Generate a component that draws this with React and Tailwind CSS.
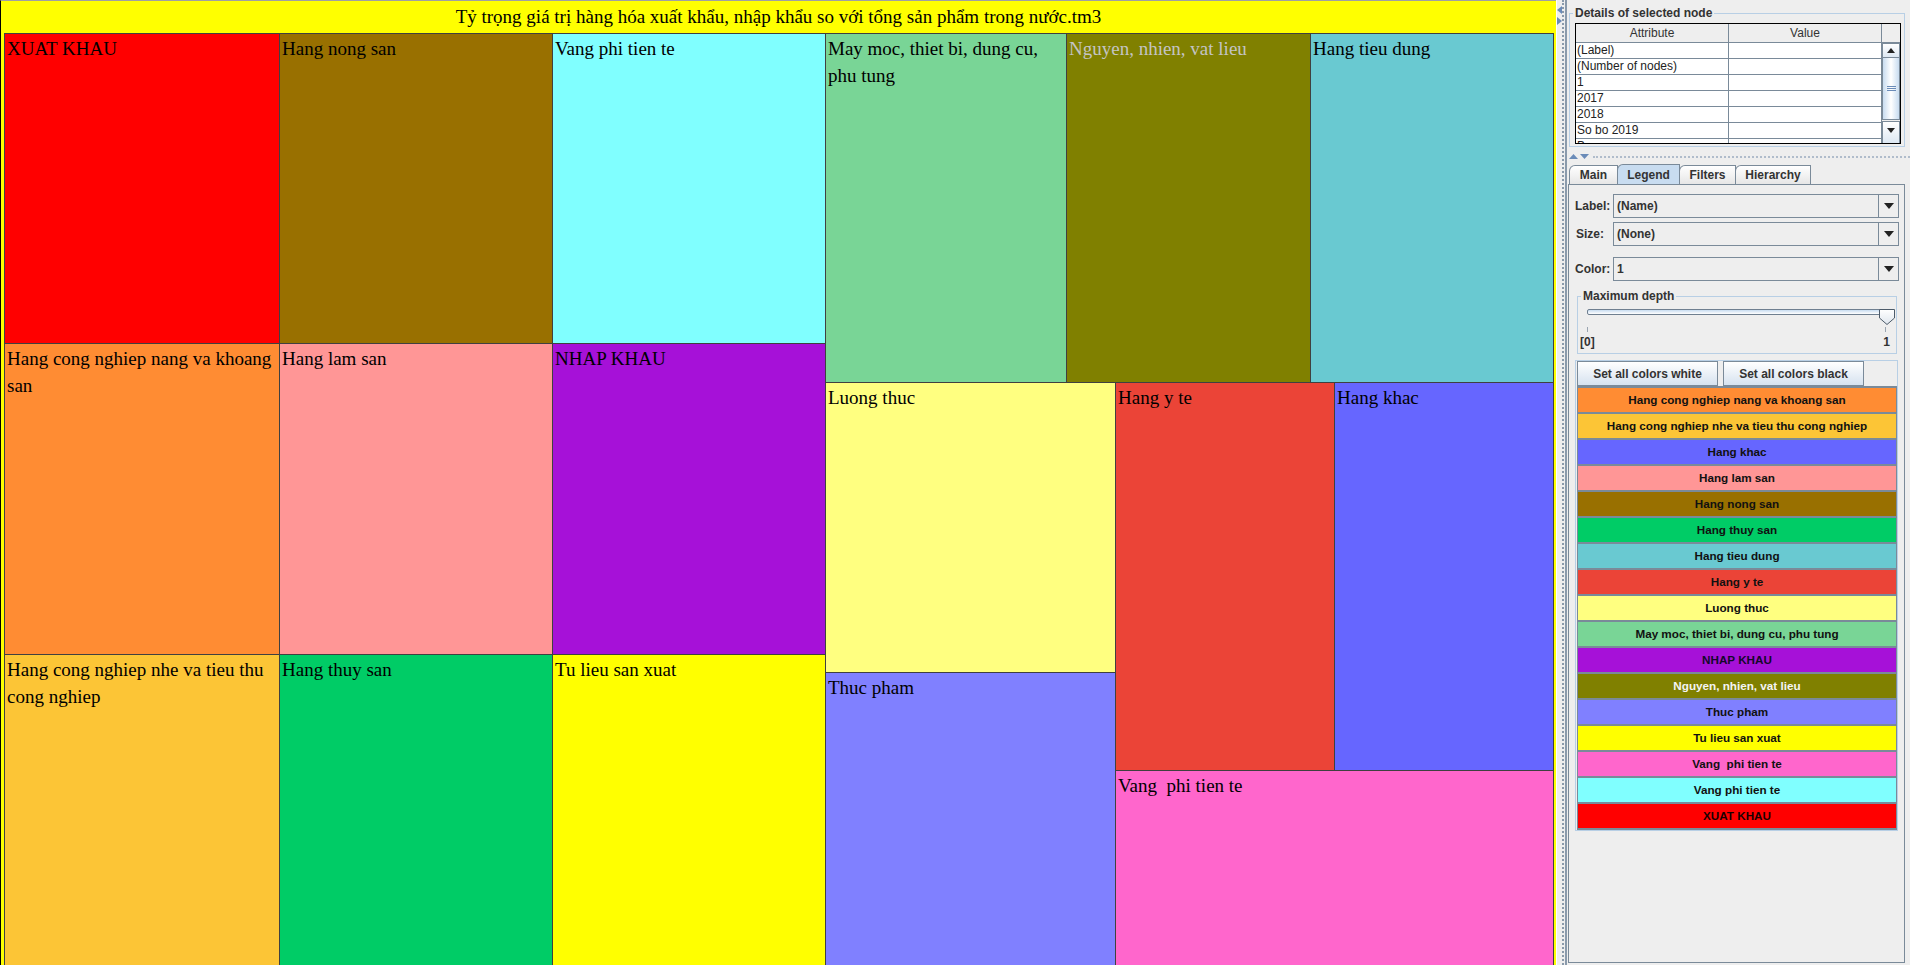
import React from 'react';

const Tile = ({ label, bg, text = 'text-black', className = '' }) => (
  <div className={`border-l border-t border-[#404040] pl-[2px] pt-[1px] overflow-hidden ${bg} ${text} ${className}`}>
    <div className="text-[19px] leading-[27px]">{label}</div>
  </div>
);

const legendItems = [
  { name: 'Hang cong nghiep nang va khoang san', bg: 'bg-[#ff8c33]' },
  { name: 'Hang cong nghiep nhe va tieu thu cong nghiep', bg: 'bg-[#fcc536]' },
  { name: 'Hang khac', bg: 'bg-[#6666ff]' },
  { name: 'Hang lam san', bg: 'bg-[#ff9696]' },
  { name: 'Hang nong san', bg: 'bg-[#997000]' },
  { name: 'Hang thuy san', bg: 'bg-[#00cc66]' },
  { name: 'Hang tieu dung', bg: 'bg-[#69c9d1]' },
  { name: 'Hang y te', bg: 'bg-[#eb4437]' },
  { name: 'Luong thuc', bg: 'bg-[#ffff80]' },
  { name: 'May moc, thiet bi, dung cu, phu tung', bg: 'bg-[#79d596]' },
  { name: 'NHAP KHAU', bg: 'bg-[#a611d8]', text: 'text-[#14082a]' },
  { name: 'Nguyen, nhien, vat lieu', bg: 'bg-[#808000]', text: 'text-[#f4f4f4]' },
  { name: 'Thuc pham', bg: 'bg-[#8080ff]' },
  { name: 'Tu lieu san xuat', bg: 'bg-[#ffff00]' },
  { name: 'Vang  phi tien te', bg: 'bg-[#ff66cc]' },
  { name: 'Vang phi tien te', bg: 'bg-[#80ffff]' },
  { name: 'XUAT KHAU', bg: 'bg-[#ff0000]', text: 'text-[#1a0000]' },
];

const detailRows = ['(Label)', '(Number of nodes)', '1', '2017', '2018', 'So bo 2019', 'Bo sung'];

const Combo = ({ value }) => (
  <div className="flex h-[24px] w-[286px] border border-[#7a8a99] bg-[#eeeeee]">
    <div className="flex-1 pl-[3px] font-bold leading-[22px] text-[#333333]">{value}</div>
    <div className="flex w-[20px] items-center justify-center border-l border-[#7a8a99]">
      <svg width="10" height="6" viewBox="0 0 10 6">
        <path d="M0 0 L10 0 L5 6 Z" fill="#222" />
      </svg>
    </div>
  </div>
);

const Treemap = () => (
  <div className="flex h-full w-[1556px] flex-col border-l border-t border-l-black border-t-[#a0a0a0] bg-[#ffff00] font-['Liberation_Serif','Times_New_Roman',serif] text-black">
    <div className="flex h-[32px] items-center justify-center text-[19px]">
      Tỷ trọng giá trị hàng hóa xuất khẩu, nhập khẩu so với tổng sản phẩm trong nước.tm3
    </div>
    <div className="flex min-h-0 flex-1 pl-[3px]">
      <div className="flex w-[275px] flex-col">
        <Tile label="XUAT KHAU" bg="bg-[#ff0000]" className="h-[310px]" />
        <Tile label="Hang cong nghiep nang va khoang san" bg="bg-[#ff8c33]" className="h-[311px]" />
        <Tile label="Hang cong nghiep nhe va tieu thu cong nghiep" bg="bg-[#fcc536]" className="flex-1" />
      </div>
      <div className="flex w-[273px] flex-col">
        <Tile label="Hang nong san" bg="bg-[#997000]" className="h-[310px]" />
        <Tile label="Hang lam san" bg="bg-[#ff9696]" className="h-[311px]" />
        <Tile label="Hang thuy san" bg="bg-[#00cc66]" className="flex-1" />
      </div>
      <div className="flex w-[273px] flex-col">
        <Tile label="Vang phi tien te" bg="bg-[#80ffff]" className="h-[310px]" />
        <Tile label="NHAP KHAU" bg="bg-[#a611d8]" className="h-[311px]" />
        <Tile label="Tu lieu san xuat" bg="bg-[#ffff00]" className="flex-1" />
      </div>
      <div className="flex w-[729px] flex-col">
        <div className="flex h-[349px]">
          <Tile label="May moc, thiet bi, dung cu, phu tung" bg="bg-[#79d596]" className="w-[241px]" />
          <Tile label="Nguyen, nhien, vat lieu" bg="bg-[#808000]" text="text-[#c4c4c4]" className="w-[244px]" />
          <Tile label="Hang tieu dung" bg="bg-[#69c9d1]" className="w-[244px] border-r" />
        </div>
        <div className="flex min-h-0 flex-1">
          <div className="flex w-[290px] flex-col">
            <Tile label="Luong thuc" bg="bg-[#ffff80]" className="h-[290px]" />
            <Tile label="Thuc pham" bg="bg-[#8080ff]" className="flex-1" />
          </div>
          <div className="flex w-[439px] flex-col">
            <div className="flex h-[388px]">
              <Tile label="Hang y te" bg="bg-[#eb4437]" className="w-[219px]" />
              <Tile label="Hang khac" bg="bg-[#6666ff]" className="w-[220px] border-r" />
            </div>
            <Tile label="Vang  phi tien te" bg="bg-[#ff66cc]" className="flex-1 border-r whitespace-pre" />
          </div>
        </div>
      </div>
    </div>
  </div>
);

const VSplitter = () => (
  <div className="flex h-full w-[11px] border-l border-r-2 border-l-white border-r-[#8a9aab] bg-[#eeeeee]">
    <div className="flex w-[5px] flex-col items-start pt-[6px]">
      <svg width="5" height="8" viewBox="0 0 5 8">
        <path d="M5 0 L0 4 L5 8 Z" fill="#6a8bb8" />
      </svg>
      <svg className="mt-[3px]" width="5" height="8" viewBox="0 0 5 8">
        <path d="M0 0 L5 4 L0 8 Z" fill="#6a8bb8" />
      </svg>
    </div>
    <div className="h-full border-l-2 border-dotted border-[#8a9aab]" />
  </div>
);

const SidePanel = () => (
  <div className="flex h-full w-[343px] flex-col bg-[#eeeeee] font-['Liberation_Sans',Arial,sans-serif] text-[12px] text-[#333333]">
    {/* details of selected node */}
    <div className="pt-[6px] pl-[2px] pr-[5px]">
      <fieldset className="border border-[#b8cfe5] px-0 pb-[2px]">
        <legend className="ml-[3px] px-[2px] text-[12px] font-bold leading-[14px]">Details of selected node</legend>
        <div className="pl-[5px] pr-[3px] pt-[3px]">
          <div className="flex h-[121px] flex-col overflow-hidden border border-black bg-white">
            <div className="flex h-[19px] shrink-0 border-b border-[#7a8a99] bg-[#eeeeee] leading-[18px]">
              <div className="w-[153px] border-r border-[#7a8a99] text-center">Attribute</div>
              <div className="w-[153px] border-r border-[#7a8a99] text-center">Value</div>
              <div className="flex-1" />
            </div>
            <div className="flex min-h-0 flex-1">
              <div className="w-[306px] overflow-hidden">
                {detailRows.map((r) => (
                  <div key={r} className="flex h-[16px] border-b border-[#7a8a99] leading-[15px] text-[#222]">
                    <div className="w-[153px] border-r border-[#7a8a99] pl-[1px]">{r}</div>
                    <div className="w-[153px] border-r border-[#7a8a99]" />
                  </div>
                ))}
              </div>
              <div className="flex flex-1 flex-col bg-[#eeeeee]">
                <div className="flex h-[15px] items-center justify-center border border-[#7a8a99] bg-gradient-to-b from-white to-[#dde8f3]">
                  <svg width="8" height="5" viewBox="0 0 8 5">
                    <path d="M0 5 L4 0 L8 5 Z" fill="#222" />
                  </svg>
                </div>
                <div className="flex h-[62px] items-center justify-center border border-t-0 border-[#7a8a99] bg-gradient-to-r from-[#c8dcf0] via-white to-[#c8dcf0]">
                  <div className="flex flex-col gap-[1px]">
                    <div className="h-px w-[9px] bg-[#6a8bb8]" />
                    <div className="h-px w-[9px] bg-[#6a8bb8]" />
                    <div className="h-px w-[9px] bg-[#6a8bb8]" />
                  </div>
                </div>
                <div className="flex-1" />
                <div className="flex h-[22px] items-start justify-center border border-b-0 border-[#7a8a99] bg-gradient-to-b from-white to-[#dde8f3] pt-[6px]">
                  <svg width="8" height="5" viewBox="0 0 8 5">
                    <path d="M0 0 L8 0 L4 5 Z" fill="#222" />
                  </svg>
                </div>
              </div>
            </div>
          </div>
        </div>
      </fieldset>
    </div>

    {/* horizontal splitter */}
    <div className="flex h-[16px] items-center gap-[2px] pl-[2px] pt-[3px]">
      <svg width="9" height="5" viewBox="0 0 9 5">
        <path d="M0 5 L4.5 0 L9 5 Z" fill="#6a8bb8" />
      </svg>
      <svg width="9" height="5" viewBox="0 0 9 5">
        <path d="M0 0 L9 0 L4.5 5 Z" fill="#6a8bb8" />
      </svg>
      <div className="ml-[2px] flex-1 border-t-2 border-dotted border-[#b0bccb]" />
    </div>

    {/* tabs */}
    <div className="flex h-[21px] items-end pl-[2px] pt-[1px] font-bold">
      <div className="flex h-[19px] w-[49px] items-center justify-center rounded-tl-[6px] border border-b-0 border-[#7a8a99] bg-gradient-to-b from-white to-[#e6e6e6]">Main</div>
      <div className="-ml-px flex h-[20px] w-[63px] items-center justify-center rounded-tl-[6px] border border-b-0 border-[#7a8a99] bg-[#c8dcf0]">Legend</div>
      <div className="-ml-px flex h-[19px] w-[57px] items-center justify-center rounded-tl-[6px] border border-b-0 border-[#7a8a99] bg-gradient-to-b from-white to-[#e6e6e6]">Filters</div>
      <div className="-ml-px flex h-[19px] w-[76px] items-center justify-center rounded-tl-[6px] border border-b-0 border-[#7a8a99] bg-gradient-to-b from-white to-[#e6e6e6]">Hierarchy</div>
    </div>

    {/* tab panel */}
    <div className="mb-[2px] ml-[1px] mr-[5px] flex min-h-0 flex-1 flex-col border border-[#7a8a99] bg-[#eeeeee]">
      <div className="flex items-center pt-[9px]">
        <div className="w-[44px] pl-[6px] font-bold">Label:</div>
        <Combo value="(Name)" />
      </div>
      <div className="flex items-center pt-[4px]">
        <div className="w-[44px] pl-[7px] font-bold">Size:</div>
        <Combo value="(None)" />
      </div>
      <div className="flex items-center pt-[11px]">
        <div className="w-[44px] pl-[6px] font-bold">Color:</div>
        <Combo value="1" />
      </div>

      {/* maximum depth */}
      <div className="ml-[8px] mr-[7px] mt-[8px]">
        <fieldset className="border border-[#b8cfe5] px-0 pb-[4px]">
          <legend className="ml-[3px] px-[2px] font-bold leading-[14px]">Maximum depth</legend>
          <div className="pl-[9px]">
            <div className="relative h-[15px] w-[308px]">
              <div className="mt-[6px] h-[6px] w-[300px] rounded-[2px] border border-[#6f7f90] bg-gradient-to-b from-[#c8dcf0] to-white" />
              <svg className="absolute left-[292px] top-0" width="16" height="16" viewBox="0 0 16 16">
                <defs>
                  <linearGradient id="thumbg" x1="0" y1="0" x2="0" y2="1">
                    <stop offset="0" stopColor="#ffffff" />
                    <stop offset="1" stopColor="#dfe6ee" />
                  </linearGradient>
                </defs>
                <path d="M0.5 0.5 L15.5 0.5 L15.5 9 L8 15.5 L0.5 9 Z" fill="url(#thumbg)" stroke="#4d5b6a" />
              </svg>
            </div>
            <div className="mt-[3px] flex h-[5px] w-[300px] justify-between">
              <div className="h-full w-px bg-[#9aa5b1]" />
              <div className="mr-[1px] h-full w-px bg-[#9aa5b1]" />
            </div>
            <div className="mt-[3px] flex w-[304px] justify-between font-bold leading-[14px]">
              <span className="-ml-[7px]">[0]</span>
              <span className="mr-[1px]">1</span>
            </div>
          </div>
        </fieldset>
      </div>

      {/* legend box */}
      <div className="ml-[6px] mr-[6px] mt-[6px] border border-[#b8cfe5]">
        <div className="flex gap-[5px] pl-[1px] font-bold">
          <div className="flex h-[25px] w-[141px] items-center justify-center border border-[#7a8a99] bg-gradient-to-b from-white to-[#d6e2ef]">Set all colors white</div>
          <div className="flex h-[25px] w-[141px] items-center justify-center border border-[#7a8a99] bg-gradient-to-b from-white to-[#d6e2ef]">Set all colors black</div>
        </div>
        <div className="ml-[1px] flex flex-col border-b-2 border-[#7a8a99] text-[11.7px] font-bold">
          {legendItems.map((it) => (
            <div
              key={it.name}
              className={`flex h-[26px] items-center justify-center whitespace-pre border-x border-t-2 border-[#7a8a99] ${it.bg} ${it.text || 'text-[#111111]'}`}
            >
              {it.name}
            </div>
          ))}
        </div>
      </div>
    </div>
  </div>
);

export default function App() {
  return (
    <div className="flex h-[965px] w-[1910px] overflow-hidden bg-[#eeeeee]">
      <Treemap />
      <VSplitter />
      <SidePanel />
    </div>
  );
}
